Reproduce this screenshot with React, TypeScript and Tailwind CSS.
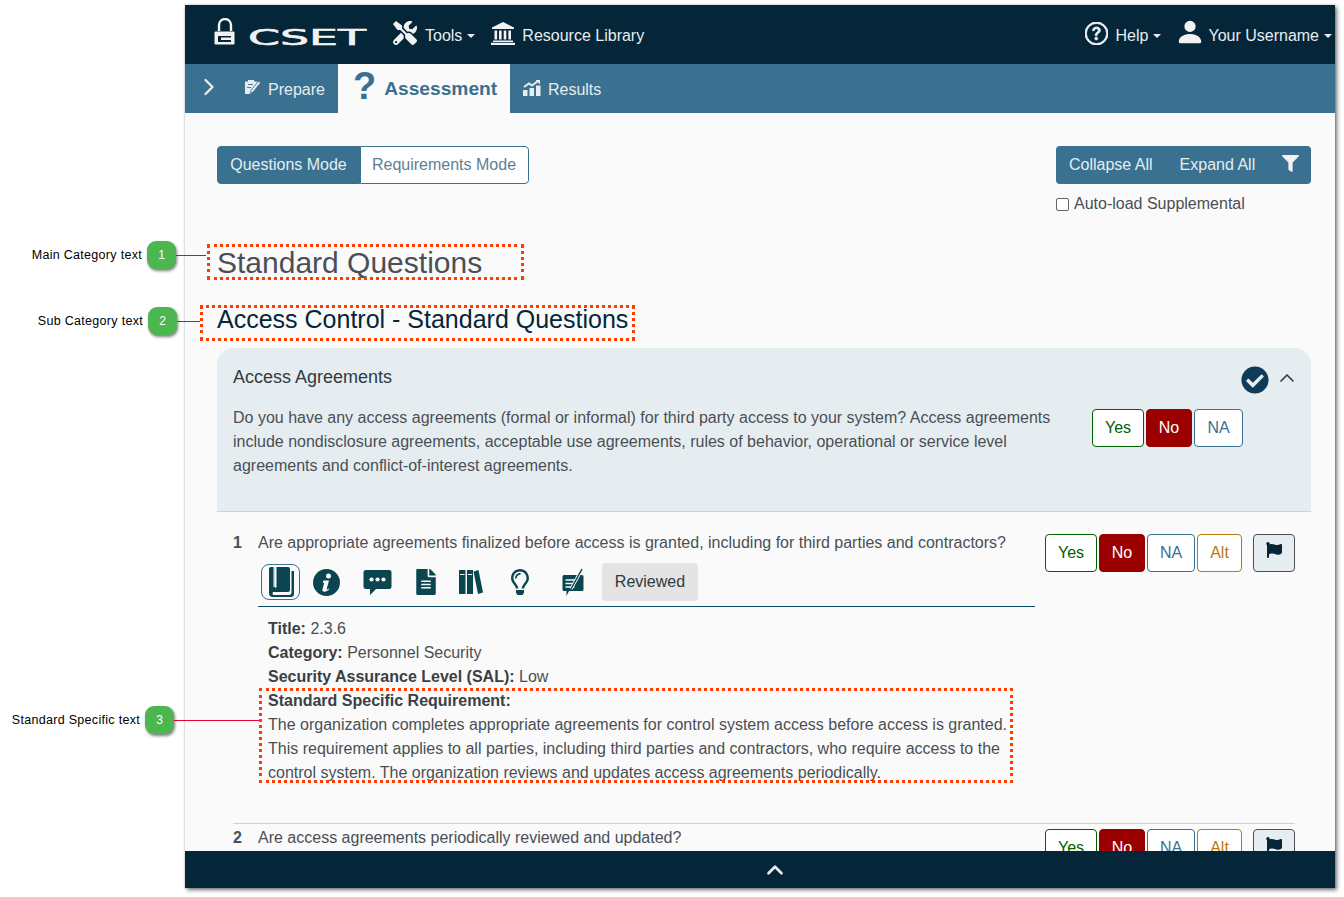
import React from "react";
import { FaTools, FaFilter, FaCheckCircle, FaFlag, FaFileAlt, FaRegLightbulb } from "react-icons/fa";
import { BsQuestionCircle, BsPersonFill } from "react-icons/bs";
import { ChevronRight, ChevronUp } from "lucide-react";

function Caret() {
  return <span className="inline-block ml-[5px] border-x-[4.5px] border-t-[4.5px] border-x-transparent border-t-[#e6edf1] align-middle" />;
}

function Logo() {
  return (
    <svg width="156" height="36" viewBox="0 0 156 36" className="block">
      <path d="M5 13V7a6 6 0 0 1 12 0v6" fill="none" stroke="#f2f2f2" strokeWidth="2.400" />
      <path d="M1.500 13.500h18a1 1 0 0 1 1 1v11a1 1 0 0 1-1 1h-18a1 1 0 0 1-1-1v-11a1 1 0 0 1 1-1zM4 18v6h13v-2H7v-2.500h10V18z" fill="#f2f2f2" fillRule="evenodd" />
      <text x="34" y="26.500" textLength="118" lengthAdjust="spacingAndGlyphs" fontFamily="'DejaVu Sans', sans-serif" fontWeight="400" fontSize="22" fill="#f2f2f2" stroke="#f2f2f2" strokeWidth="0.600">CSET</text>
    </svg>
  );
}

function LibraryIcon() {
  return (
    <svg width="24" height="23" viewBox="0 0 24 23" className="-mt-[5px] ml-[16px]">
      <path d="M12 0L23 5.500V7H1V5.500z" fill="#f2f2f2" />
      <path d="M3.500 8.500h2.600v9H3.500zM8 8.500h2.600v9H8zM12.700 8.500h2.600v9h-2.600zM17.400 8.500H20v9h-2.600z" fill="#f2f2f2" />
      <path d="M2 18.500h20V20H2zM0 20.800h24V23H0z" fill="#f2f2f2" />
    </svg>
  );
}

function PrepareIcon() {
  return (
    <svg width="17" height="17" viewBox="0 0 17 17">
      <path d="M1 2.500h3V1h6v1.500h3V5l-5.500 6.500-1 3.500H1z" fill="#e6edf1" />
      <path d="M4 5.500h5M3 8.500h4" stroke="#3a7090" strokeWidth="0.900" />
      <path d="M14.500 2L16.500 4 9 13l-3 1.500 1-3.300z" fill="#e6edf1" stroke="#3a7090" strokeWidth="0.800" />
    </svg>
  );
}

function ResultsIcon() {
  return (
    <svg width="18" height="16" viewBox="0 0 18 16" className="-mt-[4px]">
      <rect x="0" y="10" width="4.500" height="6" fill="#e6edf1" />
      <rect x="6.500" y="8" width="4.500" height="8" fill="#e6edf1" />
      <rect x="13" y="5.500" width="4.500" height="10.500" fill="#e6edf1" />
      <path d="M1 7l5-3.500 3 2L15 1" fill="none" stroke="#e6edf1" strokeWidth="2" />
      <path d="M12.500 0H17v4.500z" fill="#e6edf1" />
    </svg>
  );
}

function BookIcon() {
  return (
    <svg width="28" height="30" viewBox="0 0 28 30">
      <path d="M4 0h17a2 2 0 0 1 2 2v21a2 2 0 0 1-2 2H6a3 3 0 0 0 0 3h16a2.500 2.500 0 0 0 2.500-2V4H27v23a3 3 0 0 1-3 3H6a4 4 0 0 1-4-4V2a2 2 0 0 1 2-2z" fill="#0b4650" />
      <rect x="6.500" y="0" width="1.300" height="20" fill="#fafafa" />
      <path d="M8 0h1.500v20a2 2 0 0 1-1.500 1z" fill="#fafafa" />
    </svg>
  );
}

function InfoIcon() {
  return (
    <svg width="27" height="27" viewBox="0 0 27 27">
      <circle cx="13.500" cy="13.500" r="13.500" fill="#0b4650" />
      <circle cx="15.500" cy="7" r="2.500" fill="#fafafa" />
      <path d="M10.500 11.500h5.500l-2.300 8.500c-.1.500.4.700.9.300l1-.8.600.8c-1.500 1.600-3 2.500-4.700 2.500-1.800 0-2.400-1-2-2.500l1.700-6.200-1.500-.3z" fill="#fafafa" />
    </svg>
  );
}

function ChatDots() {
  return (
    <svg width="29" height="27" viewBox="0 0 29 27">
      <path d="M3 1h23a2.500 2.500 0 0 1 2.500 2.500v14A2.500 2.500 0 0 1 26 20H13l-6 6v-6H3a2.500 2.500 0 0 1-2.500-2.500v-14A2.500 2.500 0 0 1 3 1z" fill="#0b4650" />
      <circle cx="8.500" cy="10.500" r="2.100" fill="#fafafa" />
      <circle cx="14.500" cy="10.500" r="2.100" fill="#fafafa" />
      <circle cx="20.500" cy="10.500" r="2.100" fill="#fafafa" />
    </svg>
  );
}

function BooksIcon() {
  return (
    <svg width="24" height="24" viewBox="0 0 24 24">
      <rect x="0" y="0" width="6.500" height="24" fill="#0b4650" />
      <rect x="8" y="0" width="6" height="24" fill="#0b4650" />
      <path d="M14.500 1.500L19.500 0 24 22.500 19 24z" fill="#0b4650" />
      <path d="M1 4.500h4.500M9 4.500h4" stroke="#fafafa" strokeWidth="1" />
    </svg>
  );
}

function NoteIcon() {
  return (
    <svg width="22" height="29" viewBox="0 0 22 29">
      <path d="M2 7h18a1.500 1.500 0 0 1 1.500 1.500v13A1.500 1.500 0 0 1 20 23H7l-2.500 5v-5H2a1.500 1.500 0 0 1-1.500-1.500v-13A1.500 1.500 0 0 1 2 7z" fill="#0b4650" />
      <path d="M3.500 12h12M3.500 15.500h9M3.500 19h9" stroke="#fafafa" strokeWidth="1.300" />
      <path d="M20 1L9 21" stroke="#fafafa" strokeWidth="3.200" />
      <path d="M20 1L9 21" stroke="#0b4650" strokeWidth="1.500" />
    </svg>
  );
}

function Answer({ label, kind }: { label: string; kind: "yes" | "no" | "na" | "nasm" | "alt" }) {
  const styles = {
    yes: "w-[52px] border-[#006100] bg-white text-[#006100]",
    no: "w-[46px] border-[#9a0000] bg-[#9a0000] text-white",
    na: "w-[49px] border-[#3a7090] bg-white text-[#3a7090]",
    nasm: "w-[48px] border-[#3a7090] bg-white text-[#3a7090]",
    alt: "w-[45px] border-[#b8790f] bg-white text-[#b8790f]",
  }[kind];
  return (
    <button className={`h-[38px] shrink-0 rounded-[4px] border text-center text-[16px] ${styles}`}>{label}</button>
  );
}

function AnswerRow() {
  return (
    <div className="mt-[3px] flex shrink-0 items-start">
      <div className="flex gap-[2px]">
        <Answer label="Yes" kind="yes" />
        <Answer label="No" kind="no" />
        <Answer label="NA" kind="nasm" />
        <Answer label="Alt" kind="alt" />
      </div>
      <button className="ml-[11px] flex h-[38px] w-[42px] justify-center rounded-[4px] border border-[#4a4f55] bg-[#e6edf1] pt-[7px] text-[#052638]">
        <FaFlag size={16} />
      </button>
    </div>
  );
}

function Callout({ n, label, cls, textW, lineW }: { n: number; label: string; cls: string; textW: string; lineW: string }) {
  return (
    <div className={`absolute flex items-center ${cls}`}>
      <span className={`pt-[1px] text-right text-[12.500px] leading-none tracking-[0.3px] text-[#000] ${textW}`}>{label}</span>
      <span className="ml-[5px] flex h-[28px] w-[29px] items-center justify-center rounded-[9px] bg-[#4cb650] text-[12px] text-white shadow-[1px_2px_3px_rgba(0,0,0,0.5)]">{n}</span>
      <span className={`h-px bg-[#e8003c] ${lineW}`} />
    </div>
  );
}

export default function App() {
  return (
    <div className="relative h-[897px] w-[1344px] overflow-hidden bg-white pt-[5px] pl-[185px] font-['Liberation_Sans',Arial,sans-serif] text-[16px] text-[#4a4f55]">
      <div className="flex h-[883px] w-[1150px] flex-col shadow-[2px_2px_4px_rgba(0,0,0,0.55),0_0_2px_rgba(0,0,0,0.2)]">
        <header className="flex h-[59px] shrink-0 items-center bg-[#052638] pl-[29px] pr-[3px] pt-[2px] text-[#e6edf1]">
          <Logo />
          <FaTools size={24} className="ml-[23px] -mt-[5px] text-[#f2f2f2]" />
          <span className="ml-[8px]">Tools<Caret /></span>
          <LibraryIcon />
          <span className="ml-[7px]">Resource Library</span>
          <BsQuestionCircle size={23} strokeWidth={0.6} className="ml-auto -mt-[5px] text-[#f2f2f2]" />
          <span className="ml-[8px]">Help<Caret /></span>
          <BsPersonFill size={30} className="ml-[14px] -mt-[7px] text-[#f2f2f2]" />
          <span className="ml-[3px]">Your Username<Caret /></span>
        </header>
        <nav className="flex h-[49px] shrink-0 items-center bg-[#3a7090] pt-[2px] text-[#e6edf1]">
          <ChevronRight size={28} strokeWidth={2} className="ml-[10px] -mt-[6px]" />
          <span className="ml-[21px] -mt-[4px]"><PrepareIcon /></span>
          <span className="ml-[7px]">Prepare</span>
          <div className="ml-[13px] -mt-[2px] flex h-[49px] w-[172px] items-center bg-[#fafafa] pl-[15px] text-[#3a7090]">
            <span className="text-[38px] leading-none font-bold -mt-[6px]">?</span>
            <span className="ml-[8px] pt-[1px] text-[19.200px] font-bold">Assessment</span>
          </div>
          <span className="ml-[13px]"><ResultsIcon /></span>
          <span className="ml-[7px]">Results</span>
        </nav>
        <main className="min-h-0 flex-1 overflow-hidden bg-[#fafafa] pl-[32px] pr-[24px] pt-[33px]">
          <div className="flex items-start justify-between">
            <div className="flex h-[38px] text-[16px]">
              <button className="w-[143px] rounded-l-[4px] border border-[#3a7090] bg-[#3a7090] text-[#e6edf1]">Questions Mode</button>
              <button className="w-[169px] rounded-r-[4px] border border-[#3a7090] bg-white pr-[1px] text-[#5d7f94]">Requirements Mode</button>
            </div>
            <div className="w-[255px]">
              <div className="flex h-[38px] items-center rounded-[4px] bg-[#3a7090] pl-[13px] text-[#e6edf1]">
                <span>Collapse All</span>
                <span className="ml-[27px]">Expand All</span>
                <FaFilter size={17} className="ml-[27px] -mt-[4px] text-[#f2f2f2]" />
              </div>
              <label className="mt-[8px] flex h-[24px] items-center">
                <span className="h-[13px] w-[13px] rounded-[2px] border border-[#666] bg-white" />
                <span className="ml-[5px]">Auto-load Supplemental</span>
              </label>
            </div>
          </div>

          <h1 className="mt-[28px] h-[38px] text-[30px] leading-[38px] text-[#4a4f55]">Standard Questions</h1>
          <h2 className="mt-[20px] h-[34px] text-[25px] leading-[34px] text-[#052638]">Access Control - Standard Questions</h2>

          <section className="mt-[12px] flex h-[164px] items-start justify-between rounded-t-[16px] border-b border-[#ccd2d6] bg-[#e6edf1] pl-[16px] pr-[12px]">
            <div className="w-[826px]">
              <div className="mt-[17px] h-[24px] text-[18px] leading-[24px] text-[#2f3a42]">Access Agreements</div>
              <p className="mt-[17px] leading-[24px]">
                Do you have any access agreements (formal or informal) for third party access to your system? Access agreements include nondisclosure agreements, acceptable use agreements, rules of behavior, operational or service level agreements and conflict-of-interest agreements.
              </p>
            </div>
            <div className="flex flex-col items-end">
              <div className="mt-[18px] flex h-[28px] items-center text-[#052638]">
                <FaCheckCircle size={28} className="text-[#0d3b58]" />
                <ChevronUp size={24} strokeWidth={1.700} className="ml-[6px] -mt-[4px] text-[#3a3f45]" />
              </div>
              <div className="mr-[56px] mt-[15px] flex gap-[2px]">
                <Answer label="Yes" kind="yes" />
                <Answer label="No" kind="no" />
                <Answer label="NA" kind="na" />
              </div>
            </div>
          </section>

          <div className="mx-[16px] flex pt-[19px]">
            <div className="w-[812px] shrink-0">
              <div className="flex h-[24px] leading-[24px]">
                <span className="w-[25px] font-bold">1</span>
                <span className="whitespace-nowrap">Are appropriate agreements finalized before access is granted, including for third parties and contractors?</span>
              </div>
              <div className="ml-[25px] mt-[8px] flex h-[44px] w-[777px] items-center border-b border-[#0d4a68] pb-[5px] text-[#0b4650]">
                <span className="ml-[3px] flex h-[36px] w-[39px] items-center justify-center rounded-[8px] border border-[#3a7090]"><BookIcon /></span>
                <span className="ml-[13px]"><InfoIcon /></span>
                <span className="ml-[23px]"><ChatDots /></span>
                <FaFileAlt size={26} className="ml-[21px]" />
                <span className="ml-[20px]"><BooksIcon /></span>
                <FaRegLightbulb size={26} className="ml-[24px]" />
                <span className="ml-[29px]"><NoteIcon /></span>
                <button className="ml-[18px] h-[38px] w-[96px] rounded-[4px] bg-[#e4e4e4] text-[#2f3a42]">Reviewed</button>
              </div>
              <div className="ml-[35px] mt-[10px] leading-[24px]">
                <div><b className="text-[#3a3f45]">Title:</b> 2.3.6</div>
                <div><b className="text-[#3a3f45]">Category:</b> Personnel Security</div>
                <div><b className="text-[#3a3f45]">Security Assurance Level (SAL):</b> Low</div>
                <div><b className="text-[#3a3f45]">Standard Specific Requirement:</b></div>
                <div className="w-[745px]">The organization completes appropriate agreements for control system access before access is granted. This requirement applies to all parties, including third parties and contractors, who require access to the control system. The organization reviews and updates access agreements periodically.</div>
              </div>
            </div>
            <div className="ml-auto"><AnswerRow /></div>
          </div>

          <div className="mx-[16px] mt-[38px] flex border-t border-[#d0d0d0] pt-[2px]">
            <div className="flex h-[24px] leading-[24px]">
              <span className="w-[25px] font-bold">2</span>
              <span>Are access agreements periodically reviewed and updated?</span>
            </div>
            <div className="ml-auto"><AnswerRow /></div>
          </div>
        </main>
        <footer className="flex h-[37px] shrink-0 items-center justify-center bg-[#052638] pl-[30px] text-[#e6edf1]">
          <ChevronUp size={26} strokeWidth={2.500} />
        </footer>
      </div>

      <div className="absolute left-[207px] top-[244px] h-[36px] w-[317px] border-[3px] border-dotted border-[#ff3b00]" />
      <div className="absolute left-[200px] top-[305px] h-[36px] w-[435px] border-[3px] border-dotted border-[#ff3b00]" />
      <div className="absolute left-[259px] top-[688px] h-[95px] w-[754px] border-[3px] border-dotted border-[#ff3b00]" />

      <Callout n={1} label="Main Category text" cls="left-0 top-[241px]" textW="w-[142px]" lineW="w-[30px]" />
      <Callout n={2} label="Sub Category text" cls="left-0 top-[307px]" textW="w-[143px]" lineW="w-[23px]" />
      <Callout n={3} label="Standard Specific text" cls="left-0 top-[706px]" textW="w-[140px]" lineW="w-[85px]" />
    </div>
  );
}
